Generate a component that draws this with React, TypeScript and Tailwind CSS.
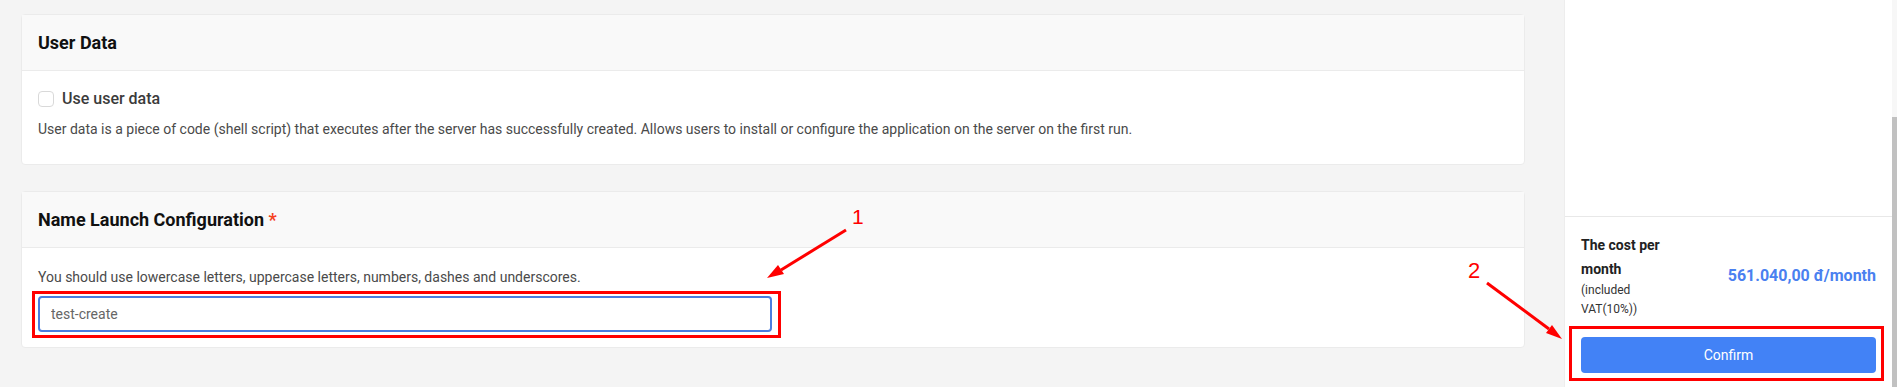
const UserDataCard = () => (
  <div className="rounded border border-[#ebebeb] bg-white">
    <div className="flex h-[56px] items-center border-b border-[#ebebeb] bg-[#f9f9f9] px-4">
      <h2 className="text-[18px] font-bold text-[#111]">User Data</h2>
    </div>
    <div className="px-4 pt-4 pb-[25px]">
      <label className="flex h-6 items-center gap-2">
        <span className="h-4 w-4 rounded-sm border border-[#d9d9d9] bg-white" />
        <span className="text-[16px] font-medium text-[#3b3b3b]">Use user data</span>
      </label>
      <p className="mt-2 text-[14px] leading-5 text-[#4a4a4a]">
        User data is a piece of code (shell script) that executes after the server has
        successfully created. Allows users to install or configure the application on the
        server on the first run.
      </p>
    </div>
  </div>
);

const NameCard = () => (
  <div className="mt-[26px] rounded border border-[#ebebeb] bg-white">
    <div className="flex h-[56px] items-center border-b border-[#ebebeb] bg-[#f9f9f9] px-4">
      <h2 className="text-[18px] font-bold text-[#111]">
        Name Launch Configuration <span className="text-[#f5421f]">*</span>
      </h2>
    </div>
    <div className="px-4 pt-[19px] pb-[15px]">
      <p className="text-[14px] leading-5 text-[#4a4a4a]">
        You should use lowercase letters, uppercase letters, numbers, dashes and underscores.
      </p>
      <input
        readOnly
        value="test-create"
        className="mt-[9px] h-9 w-[734px] rounded border-2 border-[#4a7de0] px-[11px] text-[14px] text-[#666] outline-none"
      />
    </div>
  </div>
);

const CostPanel = () => (
  <aside className="flex w-[328px] flex-col border-l border-[#ededed] bg-white">
    <div className="flex-1 border-b border-[#e8e8e8]" />
    <div className="px-4 pt-4 pb-[14px]">
      <div className="flex items-center justify-between">
        <div className="w-[90px]">
          <p className="text-[14px] leading-6 font-bold text-[#222]">The cost per month</p>
          <p className="text-[12px] leading-[19px] text-[#333]">(included VAT(10%))</p>
        </div>
        <p className="text-[16px] font-bold text-[#4a80f0]">561.040,00 đ/month</p>
      </div>
      <button className="mt-[18px] h-9 w-full rounded bg-[#4282f6] text-[14px] text-white">
        Confirm
      </button>
    </div>
  </aside>
);

// red annotation marks drawn over the screenshot
const Annotations = () => (
  <div className="pointer-events-none absolute inset-0">
    <div className="absolute top-[291px] left-[32px] h-[47px] w-[749px] border-[3px] border-[#f00]" />
    <div className="absolute top-[326px] left-[1569px] h-[55px] w-[315px] border-[3px] border-[#f00]" />
    <span className="absolute top-[206px] left-[852px] font-['Liberation_Sans',sans-serif] text-[21px] leading-none text-[#f00]">
      1
    </span>
    <span className="absolute top-[260px] left-[1468px] font-['Liberation_Sans',sans-serif] text-[22px] leading-none text-[#f00]">
      2
    </span>
    <svg className="absolute inset-0" width="1897" height="387">
      <line x1="846" y1="230" x2="781" y2="270" stroke="#f00" strokeWidth="3" />
      <polygon points="767,278 778,265 784,274" fill="#f00" />
      <line x1="1487" y1="283" x2="1549" y2="329" stroke="#f00" strokeWidth="3" />
      <polygon points="1562,339 1546,333 1552,325" fill="#f00" />
    </svg>
  </div>
);

export default function App() {
  return (
    <div className="relative flex h-[387px] w-full overflow-hidden bg-[#f4f4f4] font-['Roboto',sans-serif]">
      <main className="flex-1 pt-[14px] pr-[39px] pl-[21px]">
        <UserDataCard />
        <NameCard />
      </main>
      <CostPanel />
      <div className="flex w-[5px] flex-col bg-[#f7f7f7]">
        <div className="mt-[117px] flex-1 bg-[#c1c1c1]" />
      </div>
      <Annotations />
    </div>
  );
}
